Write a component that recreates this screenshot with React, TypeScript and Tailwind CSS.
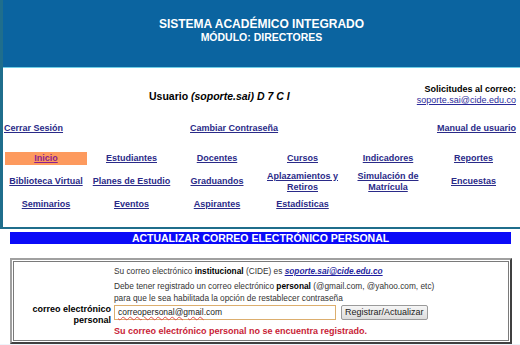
import React from 'react'

const menu: string[][] = [
  ['Inicio', 'Estudiantes', 'Docentes', 'Cursos', 'Indicadores', 'Reportes'],
  ['Biblioteca Virtual', 'Planes de Estudio', 'Graduandos', 'Aplazamientos y Retiros', 'Simulación de Matrícula', 'Encuestas'],
  ['Seminarios', 'Eventos', 'Aspirantes', 'Estadísticas', '', ''],
]

export default function App() {
  return (
    <div className="w-[520px] h-[345px] overflow-hidden bg-white font-['Liberation_Sans',Arial,sans-serif] text-black">
      {/* top panel */}
      <div className="border-l-[3px] border-b-2 border-[#1f6e8c]">
        <div className="h-[68px] bg-[#0b64a0] border-b border-[#6fcfe6] pt-[17px] text-center text-white font-bold">
          <div className="text-[12px] leading-[14px]">SISTEMA ACADÉMICO INTEGRADO</div>
          <div className="text-[10.5px] leading-[13px]">MÓDULO: DIRECTORES</div>
        </div>

        <div className="flex items-start pt-[16px] pr-[4px]">
          <div className="pl-[146px] mt-[6px] text-[10.5px] leading-[13px] font-bold">
            Usuario <i>(soporte.sai) D 7 C I</i>
          </div>
          <div className="ml-auto text-right text-[9px] leading-[11px]">
            <div className="font-bold">Solicitudes al correo:</div>
            <a href="#" className="text-[#2b2b9b] underline">soporte.sai@cide.edu.co</a>
          </div>
        </div>

        <div className="flex mt-[17px] pl-[1px] pr-[4px] text-[9px] leading-[11px] font-bold text-[#2a2a88]">
          <a href="#" className="underline">Cerrar Sesión</a>
          <a href="#" className="underline ml-[127px]">Cambiar Contraseña</a>
          <a href="#" className="underline ml-auto">Manual de usuario</a>
        </div>

        <div className="mt-[18px] pl-[2px] pb-[16px] grid grid-cols-[repeat(6,82px)] grid-rows-[13px_23px_13px] gap-x-[3.5px] gap-y-[5px] text-[9px] leading-[11px] font-bold text-center">
          {menu.flat().map((item, i) => (
            <div
              key={i}
              className={
                'flex items-center justify-center ' +
                (i === 0 ? 'bg-[#fd9a5e]' : '')
              }
            >
              {item && (
                <a href="#" className={'underline ' + (i === 0 ? 'text-[#8a1f8f]' : 'text-[#2a2a88]')}>
                  {item}
                </a>
              )}
            </div>
          ))}
        </div>
      </div>

      {/* section title */}
      <div className="mx-[10px] w-[501px] mt-[3px] h-[12px] bg-[#0a0af8] text-white text-center text-[10.5px] leading-[12px] font-bold">
        ACTUALIZAR CORREO ELECTRÓNICO PERSONAL
      </div>

      {/* form box */}
      <div className="ml-[10px] w-[502px] mt-[14px] border-2 border-t-[#a0a0a0] border-l-[#a0a0a0] border-r-[#404040] border-b-[#404040] p-[1px]">
        <div className="border border-[#7a7a7a] pt-[3px] pb-[3px] grid grid-cols-[97px_1fr] gap-x-[3px] text-[8.3px] leading-[11px] text-[#333]">
          <div />
          <div className="leading-[12px]">
            Su correo electrónico <b className="text-black">institucional</b> (CIDE) es{' '}
            <a href="#" className="italic font-bold underline text-[#1f1fa0]">soporte.sai@cide.edu.co</a>
          </div>

          <div />
          <div className="mt-[3px] leading-[12px]">
            <div>
              Debe tener registrado un correo electrónico <b className="text-black">personal</b> (@gmail.com, @yahoo.com, etc)
            </div>
            <div>para que le sea habilitada la opción de restablecer contraseña</div>
          </div>

          <div className="text-right font-bold text-black text-[9px] leading-[11px]">
            correo electrónico
            <br />
            personal
          </div>
          <div className="flex items-start gap-[5px] pt-[1px]">
            <div className="w-[222px] h-[15px] border border-[#dcae6e] bg-white px-[3px] text-[8.5px] leading-[13px] text-[#222]">
              <span className="underline decoration-wavy decoration-[#e05050]">correopersonal@gmail</span>.com
            </div>
            <button className="h-[15px] px-[3px] border border-[#9a9a9a] rounded-[2px] bg-gradient-to-b from-[#f6f6f6] to-[#dcdcdc] text-[9px] leading-[13px] text-[#222]">
              Registrar/Actualizar
            </button>
          </div>

          <div />
          <div className="font-bold text-[9px] leading-[11px] text-[#c81c36]">
            Su correo electrónico personal no se encuentra registrado.
          </div>
        </div>
      </div>
      <div className="h-[10px] bg-[#eef4fb]" />
    </div>
  )
}
